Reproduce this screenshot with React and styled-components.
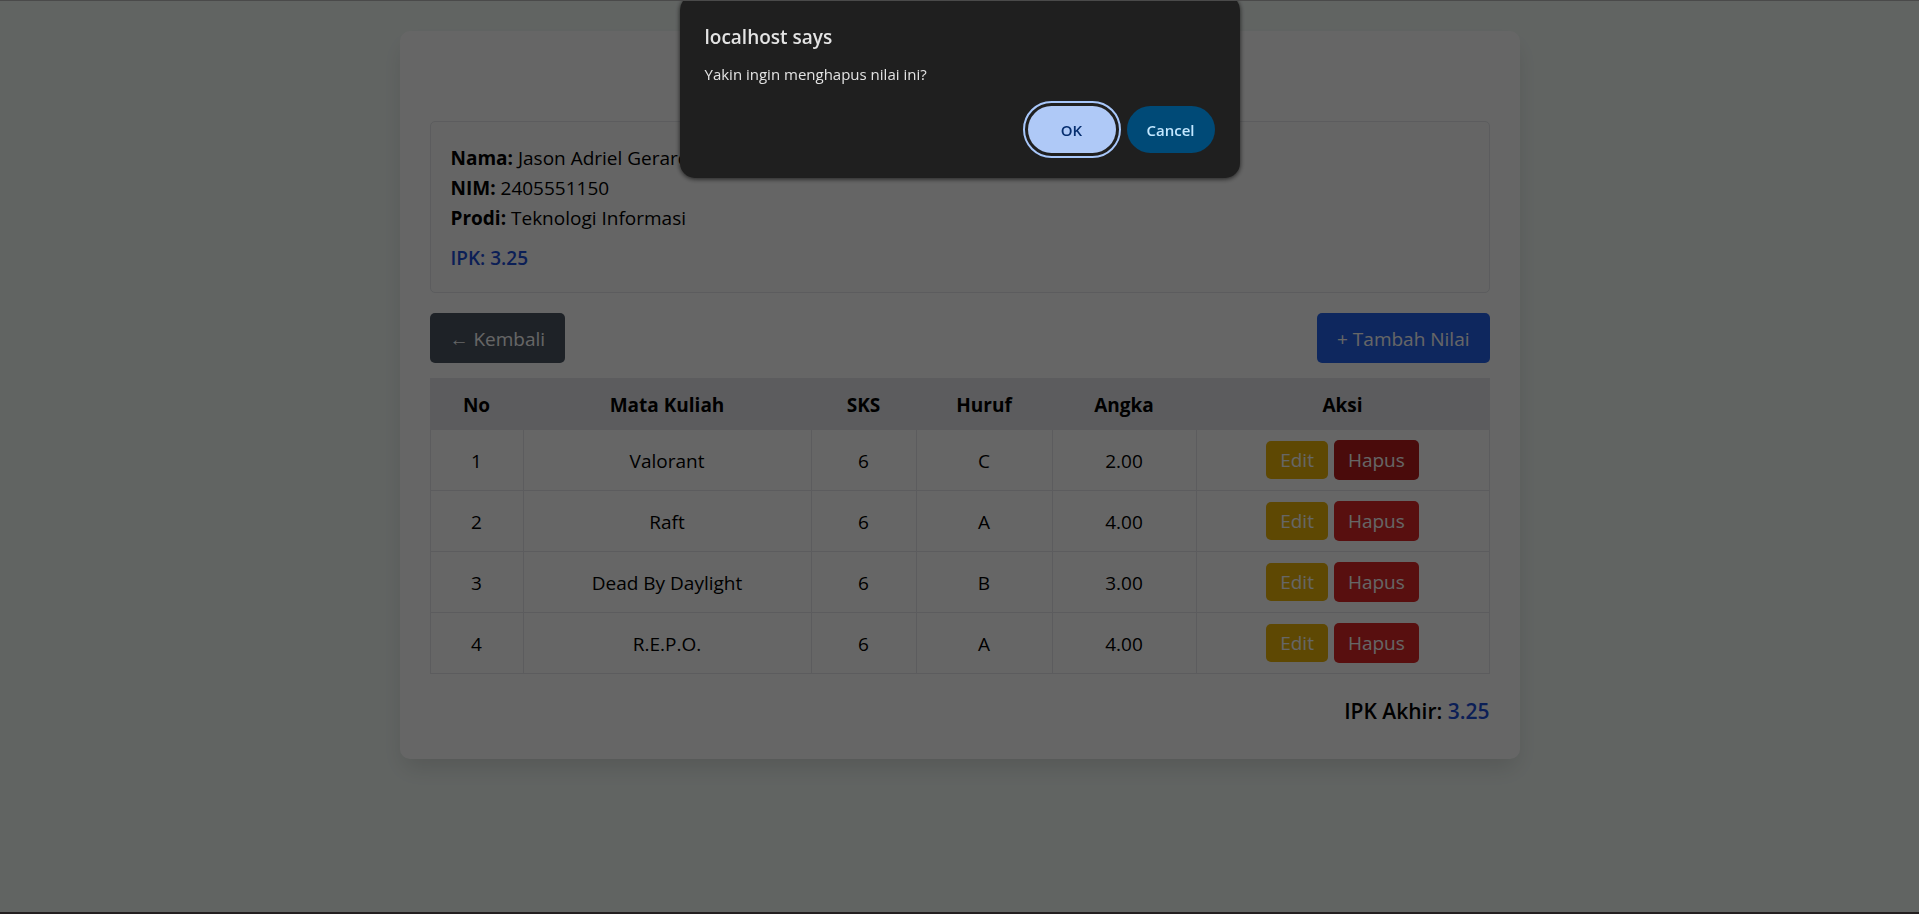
import React from "react";
import styled, { createGlobalStyle, css } from "styled-components";

const GlobalStyle = createGlobalStyle`
  *, *::before, *::after { box-sizing: border-box; }
  body {
    margin: 0;
    background: #f3faf6;
    color: #000;
    font-family: "Segoe UI", "Open Sans", "Noto Sans", sans-serif;
    font-size: 19px;
    line-height: 30px;
  }
  button { font: inherit; border: 0; cursor: pointer; }
  a { text-decoration: none; }
`;

const Page = styled.div`
  min-height: 100vh;
  padding: 31px 20px;
`;

const Card = styled.main`
  max-width: 1120px;
  margin: 0 auto;
  padding: 90px 30px 30px;
  border-radius: 10px;
  background: #fff;
  box-shadow: 0 12px 24px -4px rgba(0, 0, 0, 0.13);
`;

const StudentInfo = styled.section`
  padding: 21px 20px 19px;
  border: 1px solid #e5e7eb;
  border-radius: 5px;
  background: #fcfcfc;
`;

const InfoLine = styled.p`
  margin: 0;
`;

const Gpa = styled.p`
  margin: 10px 0 0;
  color: #1d4ed8;
  font-weight: 600;
`;

const Toolbar = styled.div`
  display: flex;
  justify-content: space-between;
  margin: 20px 0 15px;
`;

const ToolbarLink = styled.a`
  padding: 11px 20px 9px;
  border-radius: 5px;
  background: ${(p) => (p.$primary ? "#2563eb" : "#4b5563")};
  color: #fff;
`;

const GradeTable = styled.table`
  width: 100%;
  table-layout: fixed;
  border-collapse: collapse;
  text-align: center;
`;

const Column = styled.col`
  width: ${(p) => p.$width}px;
`;

const HeadCell = styled.th`
  padding: 11px 10px 9px;
  border: 1px solid #e5e7eb;
  background: #e5e7eb;
  font-weight: 700;
`;

const Cell = styled.td`
  padding: 11px 10px 9px;
  border: 1px solid #e5e7eb;
`;

const ActionsCell = styled(Cell)`
  padding: 10px;
`;

const Actions = styled.div`
  display: flex;
  justify-content: center;
  align-items: center;
  gap: 6px;
  height: 40px;
`;

const actionStyle = css`
  padding: 5px 14px;
  border-radius: 5px;
  color: #fff;
`;

const EditLink = styled.a`
  ${actionStyle}
  background: #eab308;
  line-height: 28px;
`;

const DeleteButton = styled.button`
  ${actionStyle}
  background: ${(p) => (p.$active ? "#b91c1c" : "#dc2626")};
`;

const FinalGpa = styled.p`
  margin: 20px 0 0;
  text-align: right;
  font-size: 21px;
  line-height: 35px;
  font-weight: 600;

  span { color: #1d4ed8; }
`;

const Backdrop = styled.div`
  position: fixed;
  inset: 0;
  display: flex;
  justify-content: center;
  align-items: flex-start;
  overflow: hidden;
  background: rgba(0, 0, 0, 0.6);
  border-top: 1px solid #4a4a4a;
  border-bottom: 2px solid #231f20;
`;

const Dialog = styled.div`
  width: 560px;
  margin-top: -6px;
  padding: 27px 25px 25px;
  border-radius: 15px;
  background: #1f1f1f;
  color: #e3e3e3;
  box-shadow: 0 1px 5px rgba(0, 0, 0, 0.7);
`;

const DialogTitle = styled.h2`
  margin: 0;
  font-size: 19px;
  line-height: 30px;
  font-weight: 600;
`;

const DialogMessage = styled.p`
  margin: 10px 0 0;
  font-size: 15px;
  line-height: 25px;
`;

const DialogActions = styled.div`
  display: flex;
  justify-content: flex-end;
  gap: 11px;
  margin-top: 19px;
`;

const DialogButton = styled.button`
  width: 88px;
  height: 47px;
  padding: 0;
  border-radius: 24px;
  background: ${(p) => (p.$primary ? "#afc9f7" : "#004a77")};
  color: ${(p) => (p.$primary ? "#062e6f" : "#c2e7ff")};
  font-size: 15px;
  font-weight: 600;
  line-height: 20px;
  ${(p) => p.$primary && "outline: 2px solid #a8c7fa; outline-offset: 3px;"}
`;

const columns = [
  ["No", 93],
  ["Mata Kuliah", 288],
  ["SKS", 105],
  ["Huruf", 136],
  ["Angka", 144],
  ["Aksi", 293],
];

const grades = [
  { course: "Valorant", credits: 6, letter: "C", score: "2.00" },
  { course: "Raft", credits: 6, letter: "A", score: "4.00" },
  { course: "Dead By Daylight", credits: 6, letter: "B", score: "3.00" },
  { course: "R.E.P.O.", credits: 6, letter: "A", score: "4.00" },
];

export default function App() {
  return (
    <>
      <GlobalStyle />
      <Page>
        <Card>
          <StudentInfo>
            <InfoLine><strong>Nama:</strong> Jason Adriel Gerard</InfoLine>
            <InfoLine><strong>NIM:</strong> 2405551150</InfoLine>
            <InfoLine><strong>Prodi:</strong> Teknologi Informasi</InfoLine>
            <Gpa>IPK: 3.25</Gpa>
          </StudentInfo>
          <Toolbar>
            <ToolbarLink href="#kembali">← Kembali</ToolbarLink>
            <ToolbarLink href="#tambah" $primary>+ Tambah Nilai</ToolbarLink>
          </Toolbar>
          <GradeTable>
            <colgroup>
              {columns.map(([name, width]) => <Column key={name} $width={width} />)}
            </colgroup>
            <thead>
              <tr>{columns.map(([name]) => <HeadCell key={name} scope="col">{name}</HeadCell>)}</tr>
            </thead>
            <tbody>
              {grades.map((grade, index) => (
                <tr key={grade.course}>
                  <Cell>{index + 1}</Cell>
                  <Cell>{grade.course}</Cell>
                  <Cell>{grade.credits}</Cell>
                  <Cell>{grade.letter}</Cell>
                  <Cell>{grade.score}</Cell>
                  <ActionsCell>
                    <Actions>
                      <EditLink href="#edit">Edit</EditLink>
                      <DeleteButton type="button" $active={index === 0}>Hapus</DeleteButton>
                    </Actions>
                  </ActionsCell>
                </tr>
              ))}
            </tbody>
          </GradeTable>
          <FinalGpa>IPK Akhir: <span>3.25</span></FinalGpa>
        </Card>
      </Page>
      <Backdrop>
        <Dialog role="alertdialog" aria-modal="true" aria-labelledby="dialog-title" aria-describedby="dialog-message">
          <DialogTitle id="dialog-title">localhost says</DialogTitle>
          <DialogMessage id="dialog-message">Yakin ingin menghapus nilai ini?</DialogMessage>
          <DialogActions>
            <DialogButton type="button" $primary>OK</DialogButton>
            <DialogButton type="button">Cancel</DialogButton>
          </DialogActions>
        </Dialog>
      </Backdrop>
    </>
  );
}
